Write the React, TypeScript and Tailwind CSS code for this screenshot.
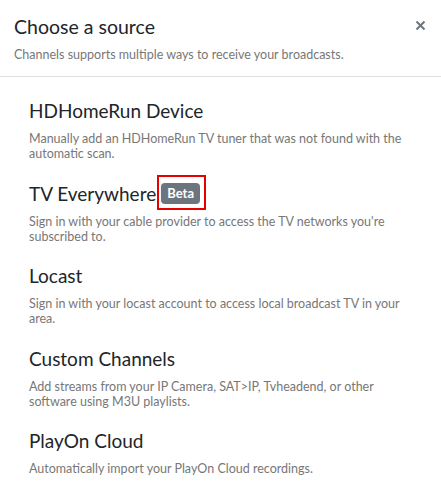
import React from 'react';

const sources = [
  {
    title: 'HDHomeRun Device',
    desc: 'Manually add an HDHomeRun TV tuner that was not found with the automatic scan.',
  },
  {
    title: 'TV Everywhere',
    beta: true,
    desc: "Sign in with your cable provider to access the TV networks you're subscribed to.",
  },
  {
    title: 'Locast',
    desc: 'Sign in with your locast account to access local broadcast TV in your area.',
  },
  {
    title: 'Custom Channels',
    desc: 'Add streams from your IP Camera, SAT>IP, Tvheadend, or other software using M3U playlists.',
  },
  {
    title: 'PlayOn Cloud',
    desc: 'Automatically import your PlayOn Cloud recordings.',
  },
];

export default function App() {
  return (
    <div
      className="w-[441px] h-[499px] bg-white rounded-[3px] overflow-hidden text-[#212529]"
      style={{ fontFamily: 'Lato, "Open Sans", sans-serif' }}
    >
      <div className="px-[14px] pt-[12px] pb-[12px] border-b border-[#dee2e6] relative">
        <div className="text-[19.5px] leading-[30px] text-[#212529]">Choose a source</div>
        <div className="text-[12.5px] leading-[18px] text-[#777] mt-[4px]">
          Channels supports multiple ways to receive your broadcasts.
        </div>
        <button className="absolute right-[15px] top-[20px]">
          <svg width="11" height="11" viewBox="0 0 11 11">
            <path d="M1.5 1.5 L9.5 9.5 M9.5 1.5 L1.5 9.5" stroke="#6c757d" strokeWidth="2" />
          </svg>
        </button>
      </div>
      <div className="pl-[29px] pr-[24px] pt-[19px] flex flex-col gap-[17.5px]">
        {sources.map((s) => (
          <div key={s.title}>
            <div className="flex items-center h-[30px] text-[19px] leading-[30px]">
              <span>{s.title}</span>
              {s.beta && (
                <span className="-mt-[2px] ml-[1px] border-[2.5px] border-[#e60000] pl-[2px] pr-[4px] pt-[6px] pb-[4px] flex">
                  <span className="bg-[#6c757d] text-white text-[13px] font-bold leading-[21px] px-[6px] rounded-[4px]">
                    Beta
                  </span>
                </span>
              )}
            </div>
            <div className="text-[12.5px] leading-[15px] text-[#777] mt-[5px]">{s.desc}</div>
          </div>
        ))}
      </div>
    </div>
  );
}
